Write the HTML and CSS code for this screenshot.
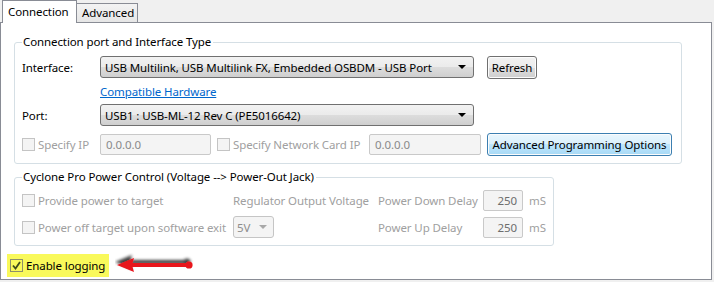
FILE: index.html
```html
<!DOCTYPE html>
<html lang="en">
<head>
  <meta charset="UTF-8" />
  <title>Connection Settings</title>
  <link rel="stylesheet" href="styles.css">
</head>
<body>
  <div class="tabs">
    <div class="tab active">Connection</div>
    <div class="tab">Advanced</div>
  </div>

  <div class="panel">
    <fieldset class="group group-port">
      <legend>Connection port and Interface Type</legend>

      <div class="row row-iface">
        <span class="lbl">Interface:</span>
        <div class="combo combo-wide"><span>USB Multilink, USB Multilink FX, Embedded OSBDM - USB Port</span><i class="caret"></i></div>
        <button class="btn btn-refresh">Refresh</button>
      </div>

      <div class="row row-link">
        <a href="#" class="link">Compatible Hardware</a>
      </div>

      <div class="row row-port">
        <span class="lbl">Port:</span>
        <div class="combo combo-wide"><span>USB1 : USB-ML-12 Rev C (PE5016642)</span><i class="caret"></i></div>
      </div>

      <div class="row row-ip">
        <label class="check off ip-check"><span class="box"></span>Specify IP</label>
        <div class="field ip-field">0.0.0.0</div>
        <label class="check off card-check"><span class="box"></span>Specify Network Card IP</label>
        <div class="field card-field">0.0.0.0</div>
        <button class="btn btn-adv">Advanced Programming Options</button>
      </div>
    </fieldset>

    <fieldset class="group group-power">
      <legend>Cyclone Pro Power Control (Voltage --&gt; Power-Out Jack)</legend>

      <div class="power-grid">
        <label class="check off"><span class="box"></span>Provide power to target</label>
        <span class="dim">Regulator Output Voltage</span>
        <span class="dim">Power Down Delay</span>
        <div class="field num">250</div>
        <span class="dim unit">mS</span>

        <label class="check off"><span class="box"></span>Power off target upon software exit</label>
        <div><div class="combo combo-off"><span>5V</span><i class="caret"></i></div></div>
        <span class="dim">Power Up Delay</span>
        <div class="field num">250</div>
        <span class="dim unit">mS</span>
      </div>
    </fieldset>

    <div class="logging-row">
      <label class="check logging">
        <span class="box checked">
          <svg width="9" height="9" viewBox="0 0 9 9"><path d="M1 4.5 L3.5 7.5 L8 1" fill="none" stroke="#3d4a1c" stroke-width="1.8"/></svg>
        </span>Enable logging
      </label>
      <svg class="arrow" width="84" height="26" viewBox="0 0 84 26">
        <defs>
          <filter id="shade" x="-20%" y="-80%" width="140%" height="260%">
            <feGaussianBlur in="SourceAlpha" stdDeviation="1.6"/>
            <feOffset dx="-2" dy="-3" result="b"/>
            <feComponentTransfer><feFuncA type="linear" slope="0.75"/></feComponentTransfer>
            <feMerge><feMergeNode/><feMergeNode in="SourceGraphic"/></feMerge>
          </filter>
        </defs>
        <g filter="url(#shade)">
          <line x1="14" y1="13" x2="73" y2="13" stroke="#e8131b" stroke-width="4"/>
          <polygon points="2,13 19,6 17,13 19,20" fill="#e8131b"/>
          <circle cx="74" cy="13" r="3.6" fill="#e8131b"/>
        </g>
      </svg>
    </div>
  </div>
</body>
</html>
```

FILE: styles.css
```css
body {
  margin: 0;
  background-color: #f0f0f0;
  font-family: "Noto Sans", "Open Sans", sans-serif;
  font-size: 11.5px;
  letter-spacing: -0.1px;
  color: #000;
  width: 714px;
  height: 282px;
  overflow: hidden;
  white-space: nowrap;
}

/* tabs */
.tabs {
  display: flex;
  align-items: flex-start;
  height: 22px;
  padding-left: 2px;
}
.tab {
  box-sizing: border-box;
  height: 19px;
  margin-top: 3px;
  width: 61px;
  padding-left: 5px;
  line-height: 18px;
  border: 1px solid #898c95;
  border-left: none;
  border-bottom: none;
  background: linear-gradient(#f3f3f3, #e6e6e6);
}
.tab.active {
  position: relative;
  z-index: 1;
  width: 75px;
  height: 23px;
  margin-top: 0;
  padding-left: 5px;
  line-height: 22px;
  border-left: 1px solid #898c95;
  background: #fff;
}

.panel {
  box-sizing: border-box;
  width: 712px;
  height: 258px;
  padding: 12px 0 0 13px;
  background: #fff;
  border: 1px solid #898c95;
}

/* group boxes */
.group {
  box-sizing: border-box;
  margin: 0;
  padding: 6px 6px 6px 7px;
  border: 1px solid #d5dfe5;
  border-radius: 3px;
}
.group legend {
  padding: 0 2px 0 1px;
  line-height: 14px;
}
.group-port { width: 668px; }
.group-power {
  width: 540px;
  margin-top: 6px;
  padding-top: 4px;
}

.row {
  display: flex;
  align-items: center;
  height: 24px;
}
.row-ip {
  height: 25px;
  margin-top: 5px;
}
.lbl { width: 78px; }
.row-link { padding-left: 78px; }

.link {
  color: #0066cc;
  text-decoration: underline;
}

/* combo boxes */
.combo {
  box-sizing: border-box;
  display: flex;
  align-items: center;
  justify-content: space-between;
  height: 22px;
  padding: 0 4px 0 4px;
  border: 1px solid #707070;
  border-radius: 3px;
  background: linear-gradient(#f2f2f2 0%, #ebebeb 50%, #dddddd 50%, #cfcfcf 100%);
}
.combo-wide { width: 374px; }
.caret {
  width: 0;
  height: 0;
  margin-right: 3px;
  border-left: 4px solid transparent;
  border-right: 4px solid transparent;
  border-top: 4px solid #000;
}
.combo-off {
  width: 41px;
  color: #8d8d8d;
  border-color: #c5c5c5;
  background: #f4f4f4;
  padding-left: 3px;
}
.combo-off .caret {
  border-top-color: #a8a8a8;
  margin-right: 2px;
}

/* buttons */
.btn {
  box-sizing: border-box;
  font: inherit;
  letter-spacing: inherit;
  color: #000;
  padding: 0;
  border: 1px solid #707070;
  border-radius: 3px;
  box-shadow: inset 0 0 0 1px #fcfcfc;
  background: linear-gradient(#f2f2f2 0%, #ebebeb 50%, #dddddd 50%, #cfcfcf 100%);
}
.btn-refresh {
  width: 50px;
  height: 23px;
  margin-left: 13px;
}
.btn-adv {
  width: 185px;
  height: 23px;
  margin-left: 6px;
  border-color: #3c7fb1;
  background: linear-gradient(#eaf6fd 0%, #d9f0fc 50%, #bee6fd 50%, #a7d9f5 100%);
}

/* text fields */
.field {
  box-sizing: border-box;
  height: 21px;
  line-height: 19px;
  padding: 0 5px;
  color: #8a8a8a;
  background: #f4f4f4;
  border: 1px solid #c9c9c9;
  border-radius: 2px;
}
.ip-field { width: 111px; }
.card-field { width: 112px; }
.num {
  width: 40px;
  text-align: right;
  color: #6d6d6d;
}

/* check boxes */
.check {
  display: flex;
  align-items: center;
}
.check .box {
  box-sizing: border-box;
  display: inline-flex;
  align-items: center;
  justify-content: center;
  width: 13px;
  height: 13px;
  margin-right: 3px;
  border: 1px solid #8e8f8f;
  background: linear-gradient(135deg, #dcdcdc, #fbfbfb);
}
.check.off {
  color: #a0a0a0;
}
.check.off .box {
  border-color: #c4c4c4;
  background: #f4f4f4;
}
.ip-check { width: 78px; }
.card-check {
  width: 152px;
  margin-left: 6px;
}

/* power grid */
.power-grid {
  display: grid;
  grid-template-columns: 211px 145px 105px 40px auto;
  grid-template-rows: 24px 24px;
  row-gap: 3px;
  align-items: center;
}
.dim { color: #a0a0a0; }
.unit { margin-left: 6px; }

/* logging */
.logging-row {
  display: flex;
  align-items: center;
  margin: 6px 0 0 -7px;
}
.logging {
  box-sizing: border-box;
  width: 102px;
  height: 23px;
  padding-left: 3px;
  background: #f9f95b;
}
.logging .box {
  border-color: #8e8f6a;
  background: transparent;
}
.arrow {
  margin-left: 6px;
}
```
